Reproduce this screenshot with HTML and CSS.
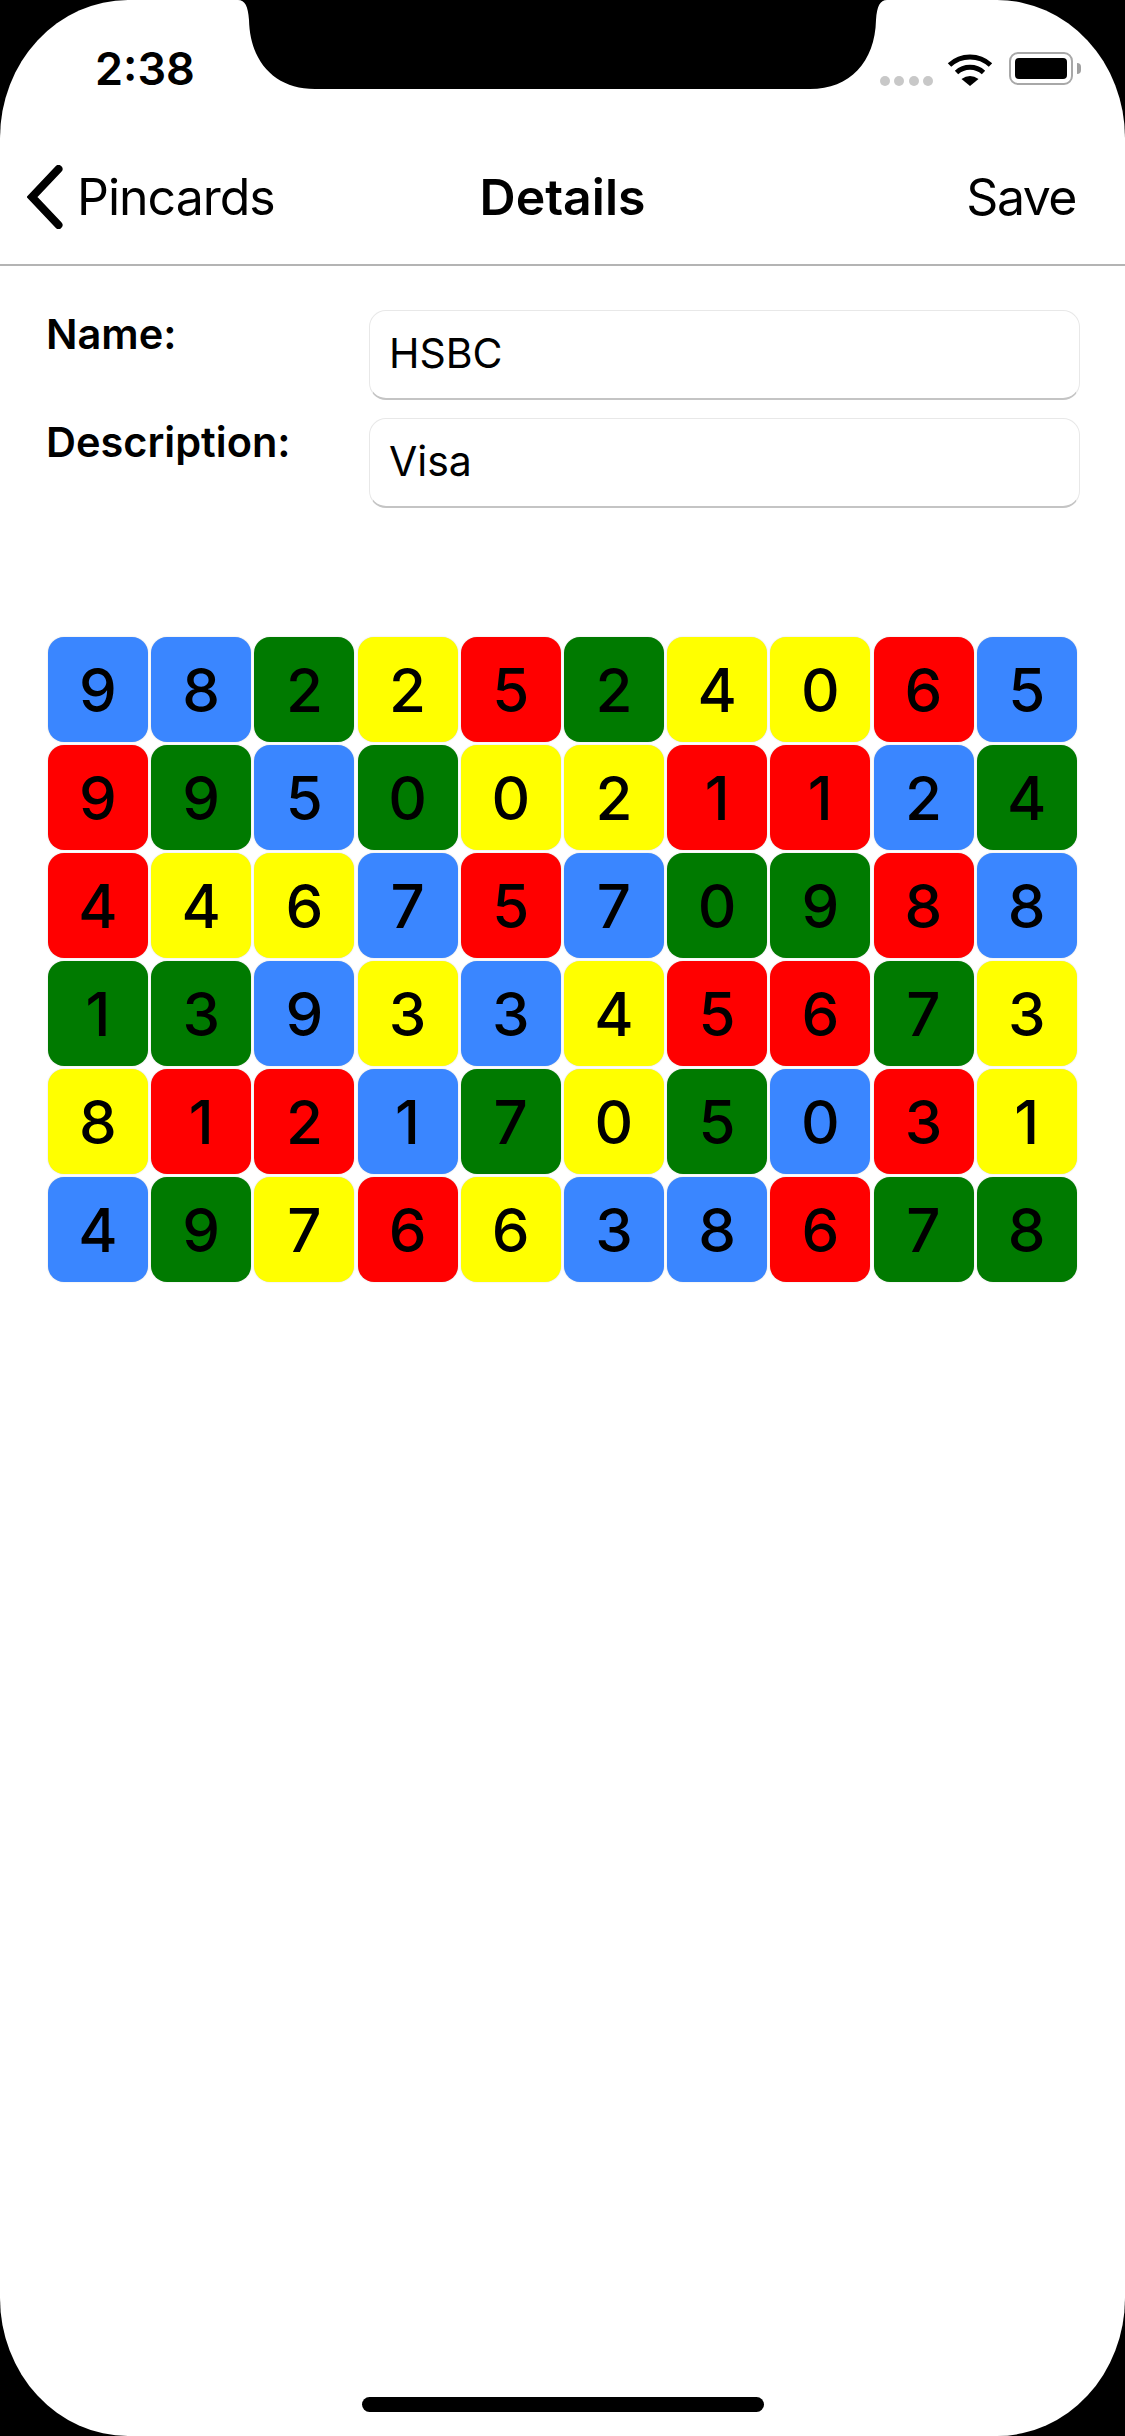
FILE: index.html
```html
<!DOCTYPE html>
<html lang="en">
<head>
  <meta charset="UTF-8">
  <meta name="viewport" content="width=device-width, initial-scale=1.0">
  <title>Pincards - Details</title>
  <link rel="stylesheet" href="styles.css">
</head>
<body>
  <div class="screen">
    <!-- Notch sits over the status bar -->
    <svg class="notch" width="655" height="89" viewBox="0 0 655 89">
      <path d="M0 0 L3 0 C10 0 13 6 14 20 C15 62 40 89 80 89 L575 89 C615 89 640 62 641 20 C642 6 645 0 652 0 L655 0 Z" fill="#000"/>
    </svg>

    <div class="status-bar">
      <span class="time">2:38</span>
      <div class="status-icons">
        <div class="signal">
          <span class="dot"></span><span class="dot"></span><span class="dot"></span><span class="dot"></span>
        </div>
        <svg class="wifi" width="46" height="34" viewBox="0 0 46 34">
          <path d="M2.5 13 A 30 30 0 0 1 43.5 13" fill="none" stroke="#000" stroke-width="5"/>
          <path d="M9.5 20.5 A 20 20 0 0 1 36.5 20.5" fill="none" stroke="#000" stroke-width="5"/>
          <path d="M14.5 27 Q23 21 31.5 27 L23 34 Z" fill="#000"/>
        </svg>
        <div class="battery">
          <div class="battery-body"><div class="battery-level"></div></div>
          <div class="battery-cap"></div>
        </div>
      </div>
    </div>

    <div class="nav-bar">
      <div class="nav-back">
        <svg class="chevron" width="36" height="64" viewBox="0 0 36 64">
          <path d="M31.5 4 L5 32 L31.5 60" fill="none" stroke="#000" stroke-width="8" stroke-linecap="round"/>
        </svg>
        <span class="nav-back-label">Pincards</span>
      </div>
      <div class="nav-title">Details</div>
      <div class="nav-action">Save</div>
    </div>

    <div class="form">
      <div class="form-row">
        <div class="form-label">Name:</div>
        <div class="form-field">HSBC</div>
      </div>
      <div class="form-row">
        <div class="form-label">Description:</div>
        <div class="form-field">Visa</div>
      </div>
    </div>

    <div class="pin-grid" id="pin-grid"></div>

    <div class="home-indicator"></div>
  </div>

  <script>
    // Digit and colour for every cell, row by row
    const digits = [
      '9822524065',
      '9950021124',
      '4467570988',
      '1393345673',
      '8121705031',
      '4976638678'
    ];
    const colours = [
      'bbgyrgyyrb',
      'rgbgyyrrbg',
      'ryybrbggrb',
      'ggbybyrrgy',
      'yrrbgygbry',
      'bgyrybbrgg'
    ];
    const names = { b: 'blue', g: 'green', y: 'yellow', r: 'red' };
    const grid = document.getElementById('pin-grid');

    digits.forEach((row, r) => {
      row.split('').forEach((digit, c) => {
        const cell = document.createElement('div');
        cell.className = 'pin-cell ' + names[colours[r][c]];
        cell.textContent = digit;
        grid.appendChild(cell);
      });
    });
  </script>
</body>
</html>
```

FILE: styles.css
```css
/* Base styles */
* {
  margin: 0;
  padding: 0;
  box-sizing: border-box;
}

body {
  width: 1125px;
  height: 2436px;
  background: #000;
  color: #000;
  font-family: 'Inter', 'Liberation Sans', sans-serif;
  overflow: hidden;
}

/* Phone screen */
.screen {
  position: relative;
  display: flex;
  flex-direction: column;
  width: 1125px;
  height: 2436px;
  background: #fff;
  border-radius: 128px / 138px;
  overflow: hidden;
}

.notch {
  position: absolute;
  top: 0;
  left: 235px;
}

/* Status bar */
.status-bar {
  display: flex;
  justify-content: space-between;
  align-items: flex-start;
  height: 89px;
  padding: 45px 44px 0 95px;
}

.time {
  font-size: 45px;
  font-weight: 600;
  line-height: 48px;
}

.status-icons {
  display: flex;
  align-items: flex-start;
  padding-top: 7px;
}

.signal {
  display: flex;
  gap: 4.5px;
  margin-top: 24px;
  margin-right: 14px;
}

.dot {
  width: 10px;
  height: 10px;
  border-radius: 50%;
  background: #c8c8c8;
}

.battery {
  display: flex;
  align-items: center;
  margin-left: 16px;
}

.battery-body {
  width: 64px;
  height: 33px;
  padding: 4px;
  border: 2px solid #a8a8a8;
  border-radius: 9px;
}

.battery-level {
  width: 100%;
  height: 100%;
  background: #000;
  border-radius: 4px;
}

.battery-cap {
  width: 4px;
  height: 11px;
  margin-left: 4px;
  background: #a0a0a0;
  border-radius: 0 4px 4px 0;
}

/* Navigation bar */
.nav-bar {
  position: relative;
  display: flex;
  justify-content: space-between;
  align-items: center;
  flex-shrink: 0;
  height: 177px;
  padding: 40px 49px 0 27px;
  border-bottom: 2px solid #b4b4b4;
  font-size: 50px;
}

.nav-back {
  display: flex;
  align-items: center;
  gap: 14px;
}

.nav-back-label {
  letter-spacing: -1px;
}

.nav-action {
  letter-spacing: -1.5px;
}

.nav-title {
  position: absolute;
  left: 0;
  right: 0;
  text-align: center;
  font-weight: 600;
}

/* Name and description */
.form {
  display: flex;
  flex-direction: column;
  gap: 18px;
  padding: 44px 45px 0 46px;
}

.form-row {
  display: grid;
  grid-template-columns: 323px 1fr;
}

.form-label {
  padding-top: 1px;
  font-size: 41.5px;
  font-weight: 600;
  line-height: 46px;
}

.form-field {
  display: flex;
  align-items: center;
  height: 90px;
  padding-left: 19px;
  padding-bottom: 3px;
  border: 1.5px solid #e8e8e8;
  border-bottom: 2.5px solid #c4c4c4;
  border-radius: 17px;
  font-size: 41px;
}

/* Pin card */
.pin-grid {
  display: grid;
  grid-template-columns: repeat(10, 100px);
  grid-auto-rows: 105px;
  gap: 3px 3.2px;
  margin-top: 129px;
  margin-left: 48px;
}

.pin-cell {
  display: flex;
  justify-content: center;
  align-items: center;
  border-radius: 16px;
  font-size: 60px;
  font-weight: 500;
  box-shadow: 0 0 1.5px rgba(0, 0, 0, 0.2);
}

.blue { background: #3a86ff; }
.green { background: #007a00; }
.yellow { background: #ffff00; }
.red { background: #ff0000; }

/* Home indicator */
.home-indicator {
  width: 402px;
  height: 15px;
  margin: auto 0 24px 362px;
  background: #000;
  border-radius: 8px;
}
```
